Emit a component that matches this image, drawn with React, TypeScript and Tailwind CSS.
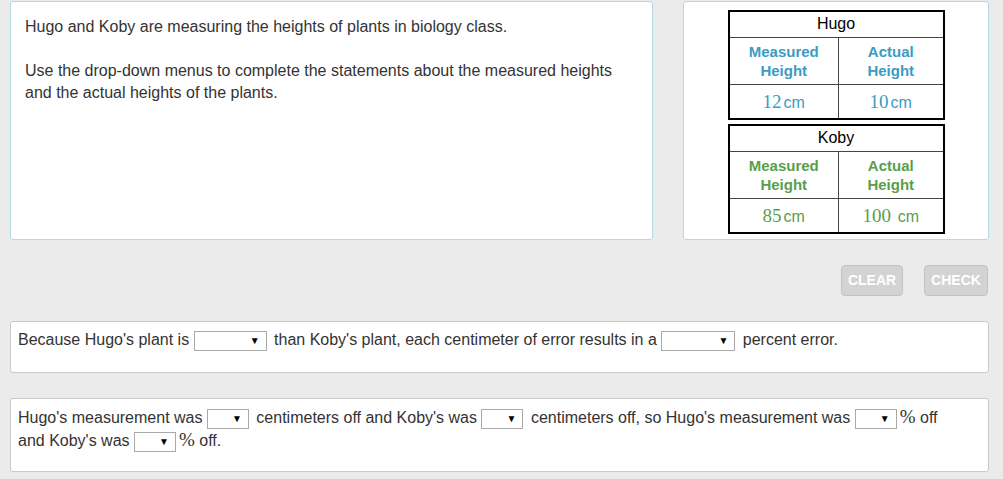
import React from 'react';

const Select: React.FC<{ w: string }> = ({ w }) => (
  <span
    className={`mr-[3px] inline-flex h-[20px] ${w} items-center justify-end border border-[#a9a9a9] bg-white pr-[6px] align-middle text-[10px] leading-none text-black`}
  >
    ▼
  </span>
);

const Cm: React.FC<{ n: string; color: string }> = ({ n, color }) => (
  <span className={color}>
    <span className="mr-[2px] font-['Liberation_Serif',serif] text-[19px]">{n}</span>
    <span className="text-[16px]">cm</span>
  </span>
);

const PlantTable: React.FC<{
  name: string;
  head: string;
  measured: string;
  actual: string;
}> = ({ name, head, measured, actual }) => (
  <table className="w-[217px] border-collapse border-2 border-black text-center">
    <tbody>
      <tr className="h-[26px]">
        <td colSpan={2} className="border border-[#444] text-[16px] leading-none text-black">
          {name}
        </td>
      </tr>
      <tr className="h-[47px]">
        <td className={`w-[110px] border border-[#444] text-[15px] font-bold leading-[19px] ${head}`}>
          Measured
          <br />
          Height
        </td>
        <td className={`border border-[#444] text-[15px] font-bold leading-[19px] ${head}`}>
          Actual
          <br />
          Height
        </td>
      </tr>
      <tr className="h-[35px]">
        <td className="border border-[#444] leading-none">
          <Cm n={measured} color={head} />
        </td>
        <td className="border border-[#444] leading-none">
          <Cm n={actual} color={head} />
        </td>
      </tr>
    </tbody>
  </table>
);

export default function App() {
  return (
    <div className="h-[479px] w-[1003px] overflow-hidden bg-[#ebebeb] font-['Liberation_Sans',Arial,sans-serif] text-[16px] text-[#333]">
      <div className="flex gap-[30px] pl-[10px] pr-[14px] pt-[1px]">
        <div className="h-[239px] w-[643px] rounded-[3px] border border-[#b4dbe4] bg-white pl-[14px] pt-[14px] leading-[22px]">
          <p>Hugo and Koby are measuring the heights of plants in biology class.</p>
          <p className="mt-[22px]">
            Use the drop-down menus to complete the statements about the measured heights
            <br />
            and the actual heights of the plants.
          </p>
        </div>
        <div className="flex h-[239px] w-[306px] flex-col items-center gap-[4px] rounded-[3px] border border-[#b4dbe4] bg-white pt-[8px]">
          <PlantTable name="Hugo" head="text-[#3b9bc2]" measured="12" actual="10" />
          <PlantTable name="Koby" head="text-[#5a9e4c]" measured="85" actual="100 " />
        </div>
      </div>

      <div className="flex justify-end gap-[21px] pr-[15px] pt-[25px]">
        <button className="h-[31px] w-[62px] rounded-[4px] border border-[#c2c2c2] bg-[#d3d3d3] text-[14px] font-bold text-white">
          CLEAR
        </button>
        <button className="h-[31px] w-[64px] rounded-[4px] border border-[#c2c2c2] bg-[#d3d3d3] text-[14px] font-bold text-white">
          CHECK
        </button>
      </div>

      <div className="mx-[10px] mt-[25px] h-[52px] w-[979px] rounded-[3px] border border-[#c9c9c9] bg-white pl-[7px] pt-[7px] leading-[22px]">
        Because Hugo's plant is <Select w="w-[73px]" /> than Koby's plant, each centimeter of error results in a{' '}
        <Select w="w-[74px]" /> percent error.
      </div>

      <div className="mx-[10px] mt-[25px] h-[74px] w-[979px] rounded-[3px] border border-[#c9c9c9] bg-white pl-[7px] pt-[7px] leading-[22px]">
        Hugo's measurement was <Select w="w-[42px]" /> centimeters off and Koby's was <Select w="w-[42px]" />{' '}
        centimeters off, so Hugo's measurement was <Select w="w-[42px]" />
        <span className="font-['Liberation_Serif',serif] text-[19px]">%</span> off
        <br />
        and Koby's was <Select w="w-[42px]" />
        <span className="font-['Liberation_Serif',serif] text-[19px]">%</span> off.
      </div>
    </div>
  );
}
